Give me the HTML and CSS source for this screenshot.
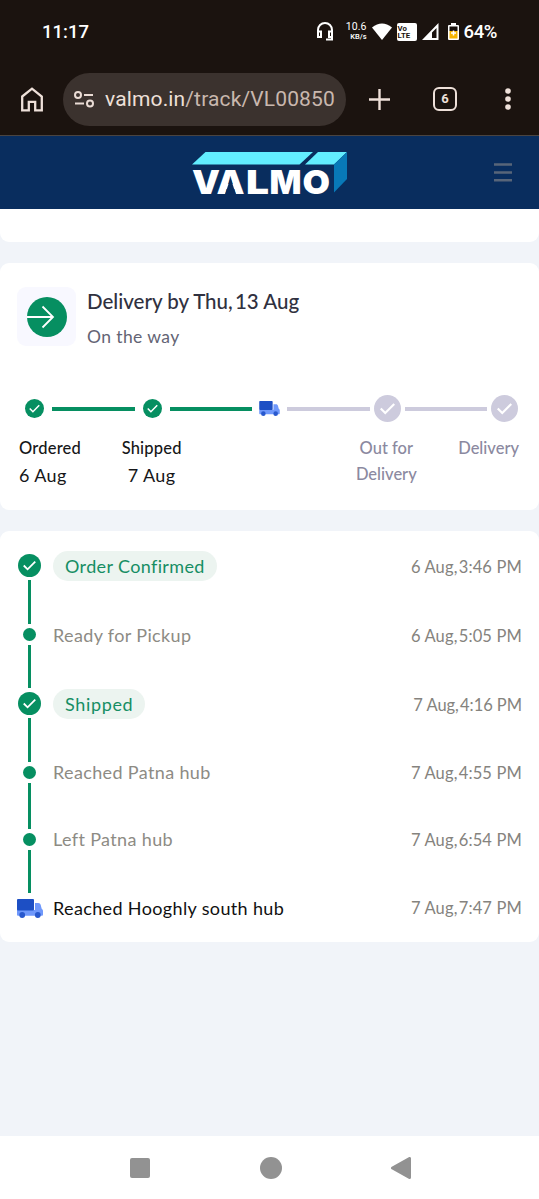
FILE: index.html
```html
<!DOCTYPE html>
<html lang="en">
<head>
<meta charset="utf-8">
<title>Valmo tracking</title>
<link rel="stylesheet" href="styles.css">
</head>
<body>
<svg class="defs" width="0" height="0" aria-hidden="true">
  <symbol id="check" viewBox="0 0 24 24"><circle cx="12" cy="12" r="12"/><path d="M6 12l4 4 8-8" fill="none" stroke="#fff" stroke-width="1.900"/></symbol>
  <symbol id="truck" viewBox="0 0 26 19"><path d="M18 4h3.200c1.500 0 2.200.8 2.600 2.200l.9 3.500c.8.6 1.300 1.200 1.300 2.300v3.500c0 .8-.5 1.300-1.300 1.300H1.300C.5 16.800 0 16.300 0 15.500V11h18z" fill="#6f98fb"/><rect width="17" height="11.500" rx="1" fill="#1d4fc4"/><circle cx="5.200" cy="16" r="2.900" fill="#2858cd"/><circle cx="20.800" cy="16" r="2.900" fill="#2858cd"/></symbol>
</svg>
<div class="phone">
  <header class="status">
    <span class="clock">11:17</span>
    <span class="status-icons">
      <svg class="headset" width="16" height="19" viewBox="0 0 16 19" fill="none" stroke="#fff" stroke-width="2"><path d="M1 14V8a7 7 0 0 1 14 0v9.500H9"/><path d="M1 9.500h3v5.500H1zM15 9.500h-3v5.500h3z"/></svg>
      <span class="speed"><span class="rate">10.6</span><span class="unit">KB/s</span></span>
      <svg class="wifi" width="20" height="17" viewBox="0 0 20 17"><path d="M0 4.500Q10-3.500 20 4.500L10 17z" fill="#fff"/></svg>
      <span class="volte"><span>Vo</span><span>LTE</span></span>
      <svg class="signal" width="17" height="17" viewBox="0 0 17 17"><path fill-rule="evenodd" d="M16.500 0v17H0zM14.500 5v10H10V9.500z" fill="#fff"/></svg>
      <svg class="battery" width="11" height="17" viewBox="0 0 11 17"><path d="M3 0h5v2h2q1 0 1 1v13q0 1-1 1H1q-1 0-1-1V3q0-1 1-1h2z" fill="#fff"/><path d="M1.500 8h8v7.500h-8z" fill="#f5b400"/><path d="M1.500 3.500h8V8h-8z" fill="#1b130f"/><path d="M5.500 7.500v5M3 10h5" stroke="#fff" stroke-width="1.500"/></svg>
      <span class="percent">64%</span>
    </span>
  </header>
  <div class="browser">
    <svg class="home" width="22" height="25" viewBox="0 0 22 25" fill="none" stroke="#eee0d9" stroke-width="2.300"><path d="M1.200 9.500L11 1.700l9.800 7.800v13.800h-6.600v-8.500H7.800v8.500H1.200z"/></svg>
    <div class="url">
      <svg width="20" height="17" viewBox="0 0 20 17" fill="none" stroke="#eadcd5" stroke-width="2"><circle cx="4" cy="4" r="3"/><circle cx="16" cy="12.500" r="3"/><path d="M10 4h9M1 12.500h9"/></svg>
      <span class="address"><span class="host">valmo.in</span>/track/VL00850</span>
    </div>
    <svg class="plus" width="21" height="21" viewBox="0 0 21 21" stroke="#eee0d9" stroke-width="2.400"><path d="M10.500 0v21M0 10.500h21"/></svg>
    <span class="tabs">6</span>
    <svg class="more" width="6" height="22" viewBox="0 0 6 22" fill="#eee0d9"><circle cx="3" cy="3" r="2.800"/><circle cx="3" cy="11" r="2.800"/><circle cx="3" cy="19" r="2.800"/></svg>
  </div>
  <div class="brand">
    <svg class="logo" width="156" height="50" viewBox="0 0 156 50" role="img" aria-label="VALMO">
      <path d="M13.500 1H121L107.500 13.500H0z" fill="#62edff"/>
      <path d="M126 1H155L142 13.500H113z" fill="#62edff"/>
      <path d="M155 1V28L142 41.500V13.500z" fill="#0879b8"/>
      <g class="logo-text">
        <text x="0" y="42.500" textLength="28" lengthAdjust="spacingAndGlyphs">V</text>
        <text x="24.500" y="42.500" textLength="28" lengthAdjust="spacingAndGlyphs">A</text>
        <text x="54" y="42.500" textLength="23" lengthAdjust="spacingAndGlyphs">L</text>
        <text x="77.500" y="42.500" textLength="32" lengthAdjust="spacingAndGlyphs">M</text>
        <text x="110.500" y="42.500" textLength="27.500" lengthAdjust="spacingAndGlyphs">O</text>
      </g>
      <path d="M38.500 27L44 43.500H33z" fill="#092d5e"/>
    </svg>
    <svg class="menu" width="18" height="19" viewBox="0 0 18 19" stroke="#586579" stroke-width="2.400"><path d="M0 1.500h18M0 9.500h18M0 17.300h18"/></svg>
  </div>
  <main>
    <section class="card stub"></section>
    <section class="card summary">
      <div class="headline">
        <span class="tile"><svg width="40" height="40" viewBox="0 0 40 40"><circle cx="20" cy="20" r="20" fill="#068f61"/><path d="M0 20h25.500M15.500 9.500L26 20 15.500 30.500" fill="none" stroke="#fff" stroke-width="1.800"/></svg></span>
        <div><h1>Delivery by Thu<span class="comma">, </span>13 Aug</h1><p class="state">On the way</p></div>
      </div>
      <div class="steps">
        <span class="slot"><svg class="done" width="19" height="19"><use href="#check"/></svg></span><i class="bar on"></i>
        <span class="slot"><svg class="done" width="19" height="19"><use href="#check"/></svg></span><i class="bar on"></i>
        <span class="slot"><svg width="21" height="15"><use href="#truck"/></svg></span><i class="bar"></i>
        <span class="slot"><svg class="todo" width="27" height="27"><use href="#check"/></svg></span><i class="bar"></i>
        <span class="slot"><svg class="todo" width="27" height="27"><use href="#check"/></svg></span>
      </div>
      <div class="labels">
        <div class="label first"><b class="reached">Ordered</b><span>6 Aug</span></div>
        <div class="label"><b class="reached">Shipped</b><span>7 Aug</span></div>
        <div></div>
        <div class="label pending"><b>Out for<br>Delivery</b></div>
        <div class="label pending last"><b>Delivery</b></div>
      </div>
    </section>
    <section class="card history">
      <div class="event"><div class="rail"><svg class="done" width="23" height="23"><use href="#check"/></svg><i></i></div><span class="name pill">Order Confirmed</span><time>6 Aug<span class="comma">, </span>3:46 PM</time></div>
      <div class="event minor"><div class="rail"><b></b><i></i></div><span class="name">Ready for Pickup</span><time>6 Aug<span class="comma">, </span>5:05 PM</time></div>
      <div class="event"><div class="rail"><svg class="done" width="23" height="23"><use href="#check"/></svg><i></i></div><span class="name pill wide">Shipped</span><time class="narrow">7 Aug<span class="comma">, </span>4:16 PM</time></div>
      <div class="event minor short"><div class="rail"><b></b><i></i></div><span class="name">Reached Patna hub</span><time>7 Aug<span class="comma">, </span>4:55 PM</time></div>
      <div class="event minor late"><div class="rail"><b></b><i></i></div><span class="name">Left Patna hub</span><time>7 Aug<span class="comma">, </span>6:54 PM</time></div>
      <div class="event late current"><div class="rail"><svg width="26" height="19"><use href="#truck"/></svg></div><span class="name">Reached Hooghly south hub</span><time>7 Aug<span class="comma">, </span>7:47 PM</time></div>
    </section>
  </main>
  <nav class="system">
    <svg width="20" height="22" viewBox="0 0 20 22" fill="#929292"><rect y="1" width="20" height="20" rx="2"/></svg>
    <svg width="22" height="22" viewBox="0 0 22 22" fill="#929292"><circle cx="11" cy="11" r="11"/></svg>
    <svg width="20" height="22" viewBox="0 0 20 22" fill="#929292" stroke="#929292" stroke-width="3" stroke-linejoin="round"><path d="M18.500 1.500v19L1.500 11z"/></svg>
  </nav>
</div>
</body>
</html>
```
FILE: styles.css
```css
* { box-sizing: border-box; }
body { margin: 0; font-family: Lato, sans-serif; color: #161719; background: #f1f4f9; }
svg { display: block; flex: none; }
.defs { position: absolute; }
.phone { width: 539px; height: 1199px; display: flex; flex-direction: column; overflow: hidden; }
.status { height: 63px; background: #1b130f; color: #fff; font-family: Roboto, sans-serif; display: flex; align-items: center; justify-content: space-between; padding: 0 42px; }
.clock { font-size: 18.500px; font-weight: 500; }
.status-icons { display: flex; align-items: center; height: 22px; }
.speed { width: 21px; margin-left: 13px; display: flex; flex-direction: column; align-items: flex-end; line-height: 10px; }
.rate { font-size: 10.500px; letter-spacing: .1px; }
.unit { font-size: 7.500px; font-weight: 500; }
.wifi { margin-left: 5px; }
.volte { width: 20px; height: 18px; margin-left: 5px; padding: 2px 1px; border-radius: 2px; background: #fff; color: #1b130f; font-size: 7.800px; font-weight: 700; line-height: 7px; display: flex; flex-direction: column; }
.signal { margin-left: 5px; }
.battery { margin-left: 9px; }
.percent { margin-left: 5px; font-size: 18.500px; font-weight: 500; line-height: 22px; letter-spacing: -.4px; }
.browser { height: 73px; background: #1b130f; border-bottom: 1px solid #4a4441; display: flex; align-items: center; padding: 0 28px 0 21px; }
.url { flex: none; width: 283px; height: 53px; margin-left: 20px; border-radius: 27px; background: #3b322e; display: flex; align-items: center; padding-left: 11px; }
.address { margin-left: 11px; font: 21px/28px Roboto, sans-serif; letter-spacing: .14px; color: #c9b8ae; white-space: nowrap; }
.host { color: #eee0d9; }
.plus { margin-left: 23px; }
.tabs { flex: none; width: 24px; height: 24px; margin-left: 43px; border: 2.400px solid #eee0d9; border-radius: 6px; color: #eee0d9; font: 700 13px/20px Roboto, sans-serif; text-align: center; }
.more { margin-left: auto; }
.brand { height: 73px; background: #092d5e; display: flex; align-items: center; padding: 0 27px 0 192px; }
.logo { margin-top: 6px; }
.menu { margin-left: auto; }
.logo-text { font: 900 33px Inter, sans-serif; fill: #fff; }
main { flex: 1; display: flex; flex-direction: column; gap: 21px; }
.card { background: #fff; border-radius: 9px; }
.stub { height: 33px; border-radius: 0 0 9px 9px; }
.summary { height: 247px; padding-top: 24px; }
.headline { display: flex; gap: 11px; padding-left: 17px; }
.tile { width: 59px; height: 59px; border-radius: 9px; background: #f8f8ff; display: flex; align-items: center; justify-content: center; }
.comma { letter-spacing: -1.500px; }
h1 { margin: 0; font-size: 20.500px; line-height: 28px; font-weight: 500; color: #303140; white-space: nowrap; }
.state { margin: 9px 0 0; font-size: 17.500px; line-height: 25px; letter-spacing: .4px; color: #636474; }
.steps { display: flex; align-items: center; height: 27px; margin-top: 46px; padding: 0 17px; }
.slot { width: 35px; display: flex; justify-content: center; }
.bar { flex: 1; height: 4px; background: #cdcbdd; }
.bar.on { background: #068f61; }
.done { fill: #068f61; }
.todo { fill: #cdcbdd; }
.labels { display: grid; grid-template-columns: 74px 1fr 1fr 1fr 74px; padding: 0 20px 0 19px; margin-top: 13px; text-align: center; }
.label { display: flex; flex-direction: column; font-size: 18px; line-height: 28px; letter-spacing: .4px; }
.label b { font-size: 16.500px; line-height: 26px; font-weight: 500; letter-spacing: 0; }
.label .reached { letter-spacing: .2px; }
.first { text-align: left; }
.last { text-align: right; }
.pending { color: #8b899f; }
.history { height: 411px; padding: 18px 17px 0; }
.event { display: flex; align-items: flex-start; height: 69px; }
.rail { width: 25px; height: 69px; display: flex; flex-direction: column; align-items: center; padding-top: 5px; }
.rail svg { margin-bottom: 3px; }
.rail i { width: 3px; flex: 1; margin-bottom: -6px; background: #068f61; }
.rail b { width: 13px; height: 13px; border-radius: 50%; background: #068f61; margin: 5px 0 4px; }
.minor .rail i { margin-bottom: -1px; }
.event.short, .short .rail { height: 67px; }
.short .rail i { margin-bottom: -6px; }
.name { margin: 3px 0 0 11px; font-size: 18px; line-height: 29px; letter-spacing: .36px; color: #8d8b84; white-space: nowrap; }
.pill { margin-top: 2px; padding: 0 12px; border-radius: 15px; background: #ecf4f0; color: #168e64; line-height: 30px; }
.wide { letter-spacing: .65px; }
.short .name, .late .name { margin-top: 2px; }
.current .name { color: #111; }
.current .rail { padding-top: 7px; }
time { margin: 4px 0 0 auto; font-size: 16.500px; line-height: 28px; letter-spacing: .15px; color: #85837e; white-space: nowrap; }
.short time, .late time { margin-top: 3px; }
.current time { margin-top: 2px; }
.narrow { letter-spacing: -.05px; }
.system { height: 63px; background: #fff; display: flex; justify-content: space-between; padding: 21px 128px 0 130px; }
```
